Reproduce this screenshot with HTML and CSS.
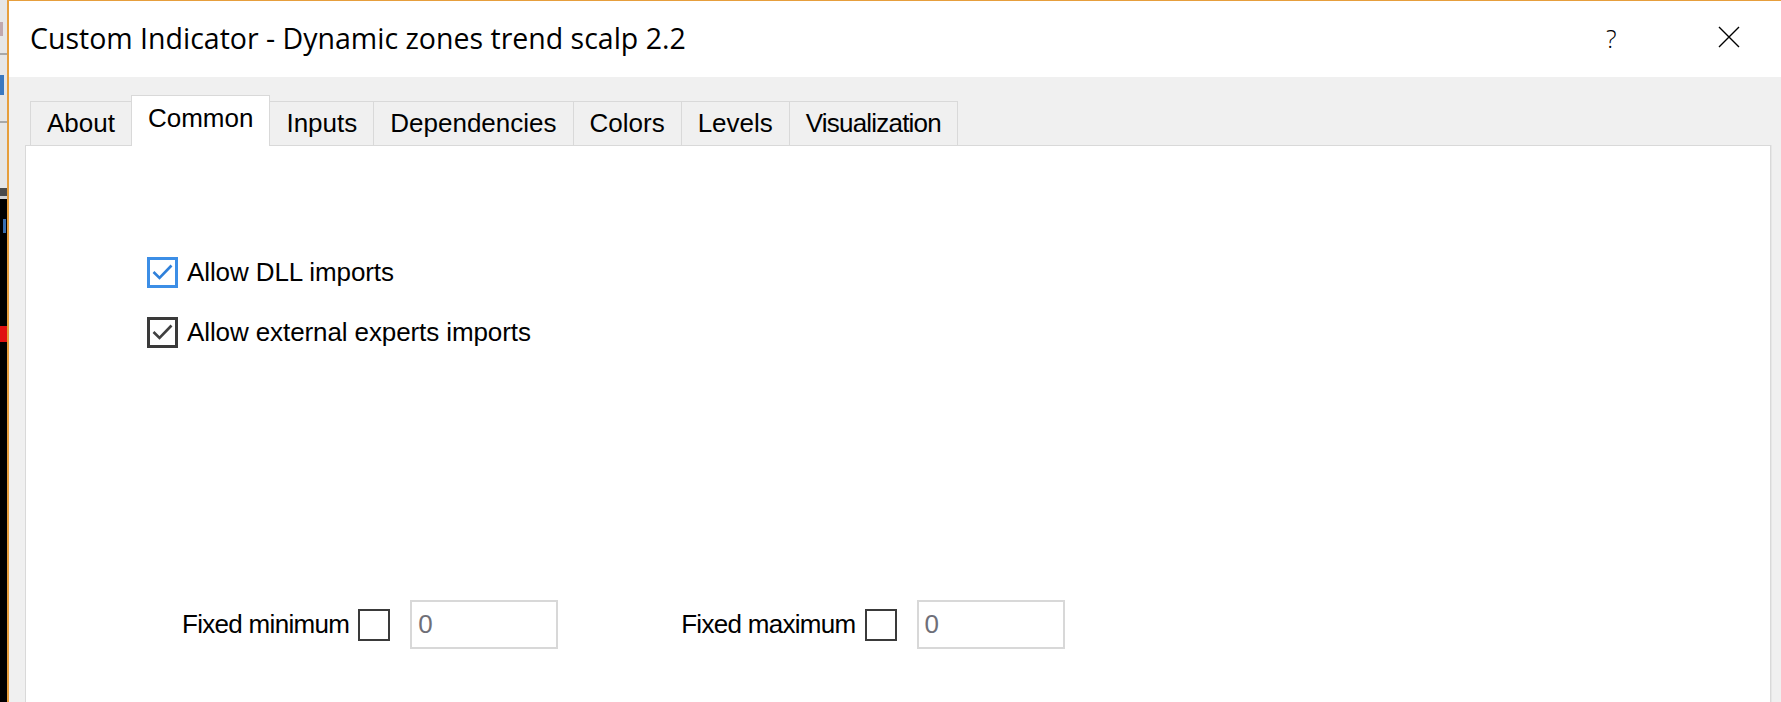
FILE: index.html
```html
<!DOCTYPE html>
<html>
<head>
<meta charset="utf-8">
<title>Custom Indicator</title>
<link rel="stylesheet" href="styles.css">
</head>
<body>
<div class="screen">
  <div class="behind">
    <div class="bh-a"><span class="bh-r"></span></div>
    <div class="bh-line"></div>
    <div class="bh-b"><span class="bh-le"></span></div>
    <div class="bh-line"></div>
    <div class="bh-c"></div>
    <div class="bh-dark"></div>
    <div class="bh-light"></div>
    <div class="bh-chart">
      <div class="bh-blue"></div>
      <div class="bh-red"></div>
    </div>
  </div>
  <div class="window">
    <div class="titlebar">
      <div class="title">Custom Indicator - Dynamic zones trend scalp 2.2</div>
      <div class="tb-help">?</div>
      <div class="tb-close">
        <svg width="22" height="22" viewBox="0 0 22 22"><path d="M1 1 L21 21 M21 1 L1 21" stroke="#000" stroke-width="1.4" fill="none"/></svg>
      </div>
    </div>
    <div class="client">
      <div class="tabs">
        <div class="tab">About</div>
        <div class="tab active">Common</div>
        <div class="tab">Inputs</div>
        <div class="tab">Dependencies</div>
        <div class="tab">Colors</div>
        <div class="tab">Levels</div>
        <div class="tab tab-tight">Visualization</div>
      </div>
      <div class="panel">
        <div class="checks">
          <label class="check-row">
            <span class="box focused">
              <svg width="25" height="25" viewBox="0 0 25 25"><path d="M3.5 12 L9.5 18 L21.5 5.5" stroke="#2f80da" stroke-width="2.6" fill="none"/></svg>
            </span>
            <span class="lbl">Allow DLL imports</span>
          </label>
          <label class="check-row">
            <span class="box">
              <svg width="25" height="25" viewBox="0 0 25 25"><path d="M3.5 12 L9.5 18 L21.5 5.5" stroke="#404040" stroke-width="2.6" fill="none"/></svg>
            </span>
            <span class="lbl">Allow external experts imports</span>
          </label>
        </div>
        <div class="fixed-row">
          <div class="fixed-group">
            <span class="lbl">Fixed minimum</span>
            <span class="box small"></span>
            <span class="field">0</span>
          </div>
          <div class="fixed-group">
            <span class="lbl">Fixed maximum</span>
            <span class="box small"></span>
            <span class="field">0</span>
          </div>
        </div>
      </div>
    </div>
  </div>
</div>
</body>
</html>
```
FILE: styles.css
```css
html, body {
  margin: 0;
  padding: 0;
  width: 1781px;
  height: 702px;
  overflow: hidden;
  background: #f0f0f0;
}

.screen {
  display: flex;
  width: 1781px;
  height: 702px;
}

/* window behind the dialog */
.behind {
  width: 7px;
  display: flex;
  flex-direction: column;
  overflow: hidden;
}
.bh-a {
  height: 53px;
  background: #e6e6e6;
  position: relative;
}
.bh-r {
  position: absolute;
  left: 0;
  top: 22px;
  width: 3px;
  height: 14px;
  background: #c0a8ae;
}
.bh-line {
  height: 2px;
  background: #a8a8a8;
}
.bh-b {
  height: 66px;
  background: #e6e6e6;
  position: relative;
}
.bh-le {
  position: absolute;
  left: 0;
  top: 20px;
  width: 4px;
  height: 20px;
  background: #3a78c0;
}
.bh-c {
  height: 65px;
  background: #e6e6e6;
}
.bh-dark {
  height: 8px;
  background: #4a4a4a;
}
.bh-light {
  height: 3px;
  background: #d0d0d0;
}
.bh-chart {
  flex: 1;
  background: #000;
  position: relative;
}
.bh-blue {
  position: absolute;
  left: 3px;
  top: 20px;
  width: 3px;
  height: 14px;
  background: #3a6fb0;
}
.bh-red {
  position: absolute;
  left: 0;
  top: 127px;
  width: 7px;
  height: 16px;
  background: #e01010;
}

/* dialog */
.window {
  flex: 1;
  display: flex;
  flex-direction: column;
  border-top: 1px solid #e69e3c;
  border-left: 2px solid #e69e3c;
  background: #f0f0f0;
  min-width: 0;
}

.titlebar {
  height: 76px;
  background: #fff;
  display: flex;
  align-items: center;
  padding-left: 21px;
  padding-bottom: 2px;
  box-sizing: border-box;
  font-family: "Open Sans", "Noto Sans", sans-serif;
  color: #000;
}
.title {
  font-size: 28.5px;
  flex: 1;
  white-space: nowrap;
}
.tb-help {
  font-size: 25px;
  width: 14px;
  margin-right: 98px;
  font-weight: 300;
}
.tb-close {
  width: 22px;
  height: 22px;
  margin-right: 41px;
  margin-bottom: 2px;
}
.tb-close svg { display: block; }

.client {
  flex: 1;
  display: flex;
  flex-direction: column;
  padding: 18px 10px 0 16px;
  font-family: "Liberation Sans", Arial, sans-serif;
  font-size: 26px;
  color: #000;
}

.tabs {
  display: flex;
  align-items: flex-end;
  padding-left: 5px;
  height: 51px;
  position: relative;
  z-index: 1;
}
.tab {
  height: 44px;
  box-sizing: border-box;
  border: 1px solid #d9d9d9;
  border-bottom: none;
  margin-left: -1px;
  padding: 0 16px 1px;
  display: flex;
  align-items: center;
  background: #f0f0f0;
  white-space: nowrap;
  margin-bottom: 1px;
}
.tab:first-child { margin-left: 0; }
.tab.tab-tight {
  letter-spacing: -0.8px;
}
.tab.active {
  height: 51px;
  background: #fff;
  margin-bottom: 0;
  padding-bottom: 5px;
  position: relative;
  z-index: 2;
}

.panel {
  flex: 1;
  background: #fff;
  border: 1px solid #d9d9d9;
  border-bottom: none;
  margin-top: -1px;
  box-shadow: 1px 0 0 #e6e6e6;
  padding: 111px 0 0 121px;
  display: flex;
  flex-direction: column;
}

.checks {
  display: flex;
  flex-direction: column;
  gap: 29px;
}
.check-row {
  display: flex;
  align-items: center;
  gap: 9px;
}
.box {
  width: 31px;
  height: 31px;
  box-sizing: border-box;
  border: 3px solid #3a3a3a;
  display: flex;
  align-items: center;
  justify-content: center;
  background: #fff;
}
.box.focused {
  border-color: #3c8ee6;
}
.box svg { display: block; }
.lbl {
  white-space: nowrap;
  letter-spacing: -0.1px;
}

.fixed-row {
  display: flex;
  gap: 123px;
  margin-top: 252px;
  margin-left: 35px;
}
.fixed-group {
  display: flex;
  align-items: center;
}
.fixed-group .lbl {
  letter-spacing: -0.7px;
  margin-right: 9px;
}
.box.small {
  width: 32px;
  height: 32px;
  border-width: 2.5px;
}
.field {
  width: 148px;
  height: 49px;
  box-sizing: border-box;
  border: 2px solid #d8d8d8;
  margin-left: 20px;
  padding-left: 6px;
  display: flex;
  align-items: center;
  color: #6f6f78;
  background: #fff;
}
```
